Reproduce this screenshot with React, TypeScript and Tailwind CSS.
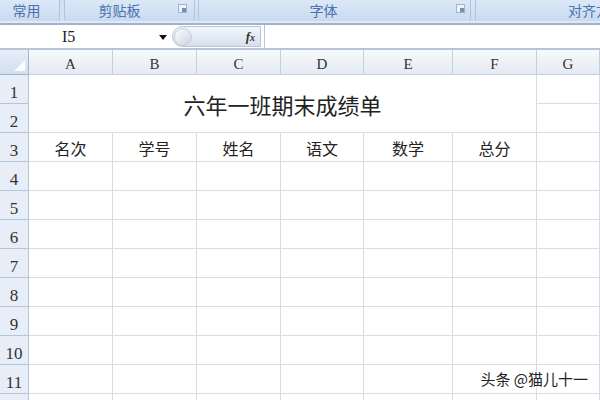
import React from "react";

const COLS = ["A", "B", "C", "D", "E", "F", "G"];
const HEADS = ["名次", "学号", "姓名", "语文", "数学", "总分"];
const ROWS = Array.from({ length: 12 }, (_, i) => i + 1);

const cjk = { fontFamily: '"Noto Sans CJK SC", "Noto Sans", sans-serif' };
const serif = { fontFamily: '"Liberation Serif", "DejaVu Serif", serif' };

function Launcher() {
  return (
    <span className="w-[9px] h-[9px] border border-[#9fb4cf] bg-[#eef3fa] flex items-end justify-end">
      <span className="w-[4px] h-[4px] bg-[#7b8fa9]" />
    </span>
  );
}

function Ribbon() {
  return (
    <div className="h-[21px] flex bg-gradient-to-b from-[#dce8f7] to-[#c9daf0] text-[14px] text-[#4a72ad]" style={cjk}>
      <div className="w-[60px] flex items-center justify-center pr-[6px] border-r border-[#aec4e0]">常用</div>
      <div className="w-[4px] bg-[#d2e0f2]" />
      <div className="w-[131px] flex items-center relative border-x border-[#aec4e0] rounded-b-[3px]">
        <span className="flex-1 text-center pr-[20px]">剪贴板</span>
        <span className="absolute right-[7px] top-[4px]"><Launcher /></span>
      </div>
      <div className="w-[3px]" />
      <div className="w-[273px] flex items-center relative border-x border-[#aec4e0] rounded-b-[3px]">
        <span className="flex-1 text-center pr-[22px]">字体</span>
        <span className="absolute right-[5px] top-[4px]"><Launcher /></span>
      </div>
      <div className="w-[4px]" />
      <div className="flex-1 flex items-center justify-end border-l border-[#aec4e0] whitespace-nowrap overflow-hidden">
        <span className="mr-[-24px]">对齐方式</span>
      </div>
    </div>
  );
}

function FormulaBar() {
  return (
    <div>
      <div className="h-[2px] bg-[#dfe9f5]" />
      <div className="h-[2px] bg-[#9fb3cc]" />
      <div className="h-[25px] flex items-center bg-white border-b-2 border-[#b7c5d8]">
        <div className="w-[172px] h-full flex items-center relative">
          <span className="ml-[62px] text-[16px] text-[#222]" style={serif}>I5</span>
          <svg className="absolute left-[159px] top-[10px]" width="8" height="5" viewBox="0 0 8 5">
            <path d="M0 0h8L4 5z" fill="#111" />
          </svg>
        </div>
        <div className="w-[89px] h-[21px] relative rounded-l-full rounded-r-[2px] border border-[#b9c6d8] bg-gradient-to-b from-[#f3f6fb] to-[#d6e0ee] flex items-center justify-end pr-[5px]">
          <span className="absolute left-[1px] top-[1px] w-[18px] h-[18px] rounded-full bg-gradient-to-br from-white to-[#c9d3e0] border border-[#c4cfdc]" />
          <span className="italic font-bold text-[13px] text-[#333]" style={serif}>
            f<span className="text-[10px]">x</span>
          </span>
        </div>
        <div className="w-px h-full bg-[#b7c5d8] ml-[3px]" />
      </div>
    </div>
  );
}

function Sheet() {
  return (
    <div className="grid grid-cols-[29px_84px_84px_84px_83px_89px_84px_1fr] grid-rows-[25px_repeat(12,29px)] text-[#222]">
      <div className="relative border-r border-b border-[#9eb6ce] bg-gradient-to-b from-[#e6eef9] to-[#d3dfef]">
        <svg className="absolute right-[3px] bottom-[3px]" width="11" height="11" viewBox="0 0 11 11">
          <path d="M11 0V11H0z" fill="#ffffff" opacity="0.9" />
        </svg>
      </div>
      {COLS.map((c) => (
        <div
          key={c}
          className="flex items-center justify-center pt-[4px] border-r border-b border-[#c5d0df] bg-gradient-to-b from-[#f7f9fc] to-[#e4eaf2] text-[15px] text-[#333]"
          style={serif}
        >
          {c}
        </div>
      ))}

      {ROWS.map((r) => (
        <React.Fragment key={r}>
          <div
            className="flex items-end justify-center leading-[20px] border-r border-b border-[#b4c6dc] bg-[#e8eef7] text-[17px] text-[#333]"
            style={{ ...serif, gridColumn: 1, gridRow: r + 1 }}
          >
            {r}
          </div>
          {r === 1 && (
            <div
              className="col-start-2 col-end-8 row-start-2 row-end-4 flex items-center justify-center border-r border-b border-[#d9dde2] text-[22px] text-[#222] pt-[1px]"
              style={cjk}
            >
              六年一班期末成绩单
            </div>
          )}
          {r === 3 &&
            HEADS.map((h, i) => (
              <div
                key={h}
                className="flex items-center justify-center pt-[2px] border-r border-b border-[#d9dde2] text-[16px]"
                style={{ ...cjk, gridColumn: i + 2, gridRow: 4 }}
              >
                {h}
              </div>
            ))}
          {r > 3 &&
            [2, 3, 4, 5, 6, 7].map((c) => (
              <div key={c} className="border-r border-b border-[#d9dde2]" style={{ gridColumn: c, gridRow: r + 1 }} />
            ))}
          <div className="border-r border-b border-[#d9dde2]" style={{ gridColumn: 8, gridRow: r + 1 }} />
        </React.Fragment>
      ))}
    </div>
  );
}

export default function App() {
  return (
    <div className="w-[600px] h-[400px] overflow-hidden bg-white relative">
      <Ribbon />
      <FormulaBar />
      <Sheet />
      <div
        className="absolute right-[12px] bottom-[10px] text-[15px] text-[#222] [text-shadow:0_0_2px_#fff,0_0_2px_#fff]"
        style={cjk}
      >
        头条 @猫儿十一
      </div>
    </div>
  );
}
